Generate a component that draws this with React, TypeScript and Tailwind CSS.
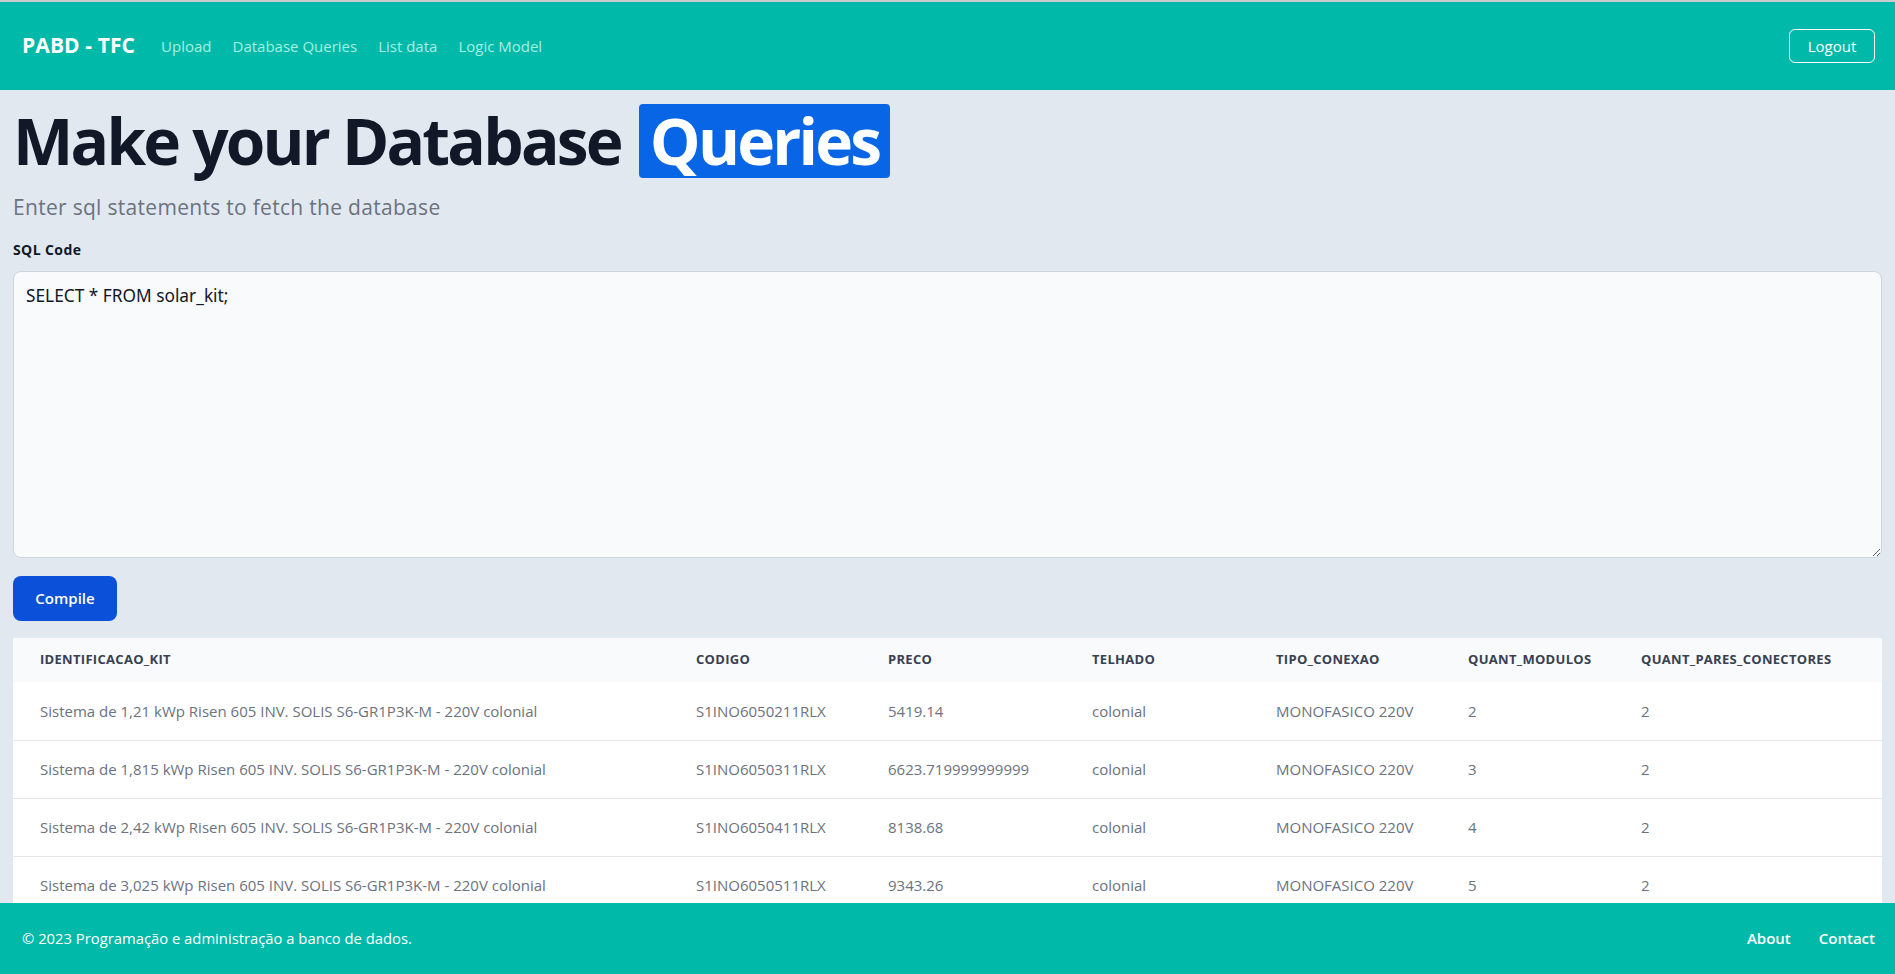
import React from "react";

const rows = [
  ["Sistema de 1,21 kWp Risen 605 INV. SOLIS S6-GR1P3K-M - 220V colonial", "S1INO6050211RLX", "5419.14", "colonial", "MONOFASICO 220V", "2", "2"],
  ["Sistema de 1,815 kWp Risen 605 INV. SOLIS S6-GR1P3K-M - 220V colonial", "S1INO6050311RLX", "6623.719999999999", "colonial", "MONOFASICO 220V", "3", "2"],
  ["Sistema de 2,42 kWp Risen 605 INV. SOLIS S6-GR1P3K-M - 220V colonial", "S1INO6050411RLX", "8138.68", "colonial", "MONOFASICO 220V", "4", "2"],
  ["Sistema de 3,025 kWp Risen 605 INV. SOLIS S6-GR1P3K-M - 220V colonial", "S1INO6050511RLX", "9343.26", "colonial", "MONOFASICO 220V", "5", "2"],
  ["Sistema de 3,63 kWp Risen 605 INV. SOLIS S6-GR1P3K-M - 220V colonial", "S1INO6050611RLX", "10547.84", "colonial", "MONOFASICO 220V", "6", "2"],
  ["Sistema de 4,235 kWp Risen 605 INV. SOLIS S6-GR1P3K-M - 220V colonial", "S1INO6050711RLX", "11752.42", "colonial", "MONOFASICO 220V", "7", "2"],
];

const headers = ["IDENTIFICACAO_KIT", "CODIGO", "PRECO", "TELHADO", "TIPO_CONEXAO", "QUANT_MODULOS", "QUANT_PARES_CONECTORES"];
const widths = ["w-[659px]", "w-[192px]", "w-[204px]", "w-[184px]", "w-[192px]", "w-[173px]", "w-auto"];

export default function App() {
  return (
    <div className="h-screen flex flex-col overflow-hidden bg-[#e2e8f0] font-['Open_Sans',sans-serif]">
      <nav className="shrink-0 border-t-2 border-[#c9cbcd] bg-[#00b9a9] h-[90px] flex items-center justify-between pl-[22px] pr-[20px]">
        <div className="flex items-center">
          <span className="text-white font-bold text-[21px] tracking-[0.1px]">PABD - TFC</span>
          <div className="flex items-center gap-[21px] ml-[26px] text-[15px] text-[#a3f1e2]">
            <a>Upload</a>
            <a>Database Queries</a>
            <a>List data</a>
            <a>Logic Model</a>
          </div>
        </div>
        <button className="h-[34px] w-[86px] border border-white rounded-md text-white text-[15px]">Logout</button>
      </nav>

      <main className="flex-1 overflow-hidden px-[13px]">
        <h1 className="mt-[14px] text-[64px] leading-[74px] font-bold text-[#111827] tracking-[-2.8px] whitespace-nowrap">
          Make your Database
          <span className="inline-block ml-[18px] bg-[#0866e6] text-white rounded px-[11px] h-[74px]">Queries</span>
        </h1>
        <p className="mt-[15px] text-[21px] leading-[28px] text-[#6b7280] tracking-[0.3px]">Enter sql statements to fetch the database</p>
        <label className="block mt-[19px] text-[14px] leading-[20px] font-bold text-[#111827] tracking-[0.4px]">SQL Code</label>
        <textarea
          className="block mt-[11px] w-full h-[287px] rounded-lg border border-[#d1d5db] bg-[#f9fafb] p-3 text-[17.3px] leading-6 text-[#111827] font-['Noto_Sans',sans-serif] outline-none"
          defaultValue="SELECT * FROM solar_kit;"
        />
        <button className="mt-[18px] h-[45px] w-[104px] rounded-lg bg-[#0b50d9] text-white text-[15px] font-semibold">Compile</button>
        <table className="mt-[17px] w-full table-fixed bg-white text-left">
          <thead className="bg-[#f9fafb]">
            <tr className="h-[44px]">
              {headers.map((h, i) => (
                <th key={h} className={`${widths[i]} ${i === 0 ? "pl-[27px]" : "pl-6"} pr-2 text-[13px] tracking-[0.3px] font-bold text-[#374151] whitespace-nowrap`}>
                  {h}
                </th>
              ))}
            </tr>
          </thead>
          <tbody>
            {rows.map((r, ri) => (
              <tr key={ri} className="h-[58px] border-b border-[#e5e7eb]">
                {r.map((c, ci) => (
                  <td key={ci} className={`${ci === 0 ? "pl-[27px]" : "pl-6"} pr-2 text-[15px] text-[#6b7280] whitespace-nowrap`}>
                    {c}
                  </td>
                ))}
              </tr>
            ))}
          </tbody>
        </table>
      </main>

      <footer className="shrink-0 h-[71px] bg-[#00b9a9] flex items-center justify-between pl-[22px] pr-[20px] text-white">
        <span className="text-[14.8px]">© 2023 Programação e administração a banco de dados.</span>
        <div className="flex items-center gap-[28px] text-[15px] font-semibold">
          <a>About</a>
          <a>Contact</a>
        </div>
      </footer>
    </div>
  );
}
